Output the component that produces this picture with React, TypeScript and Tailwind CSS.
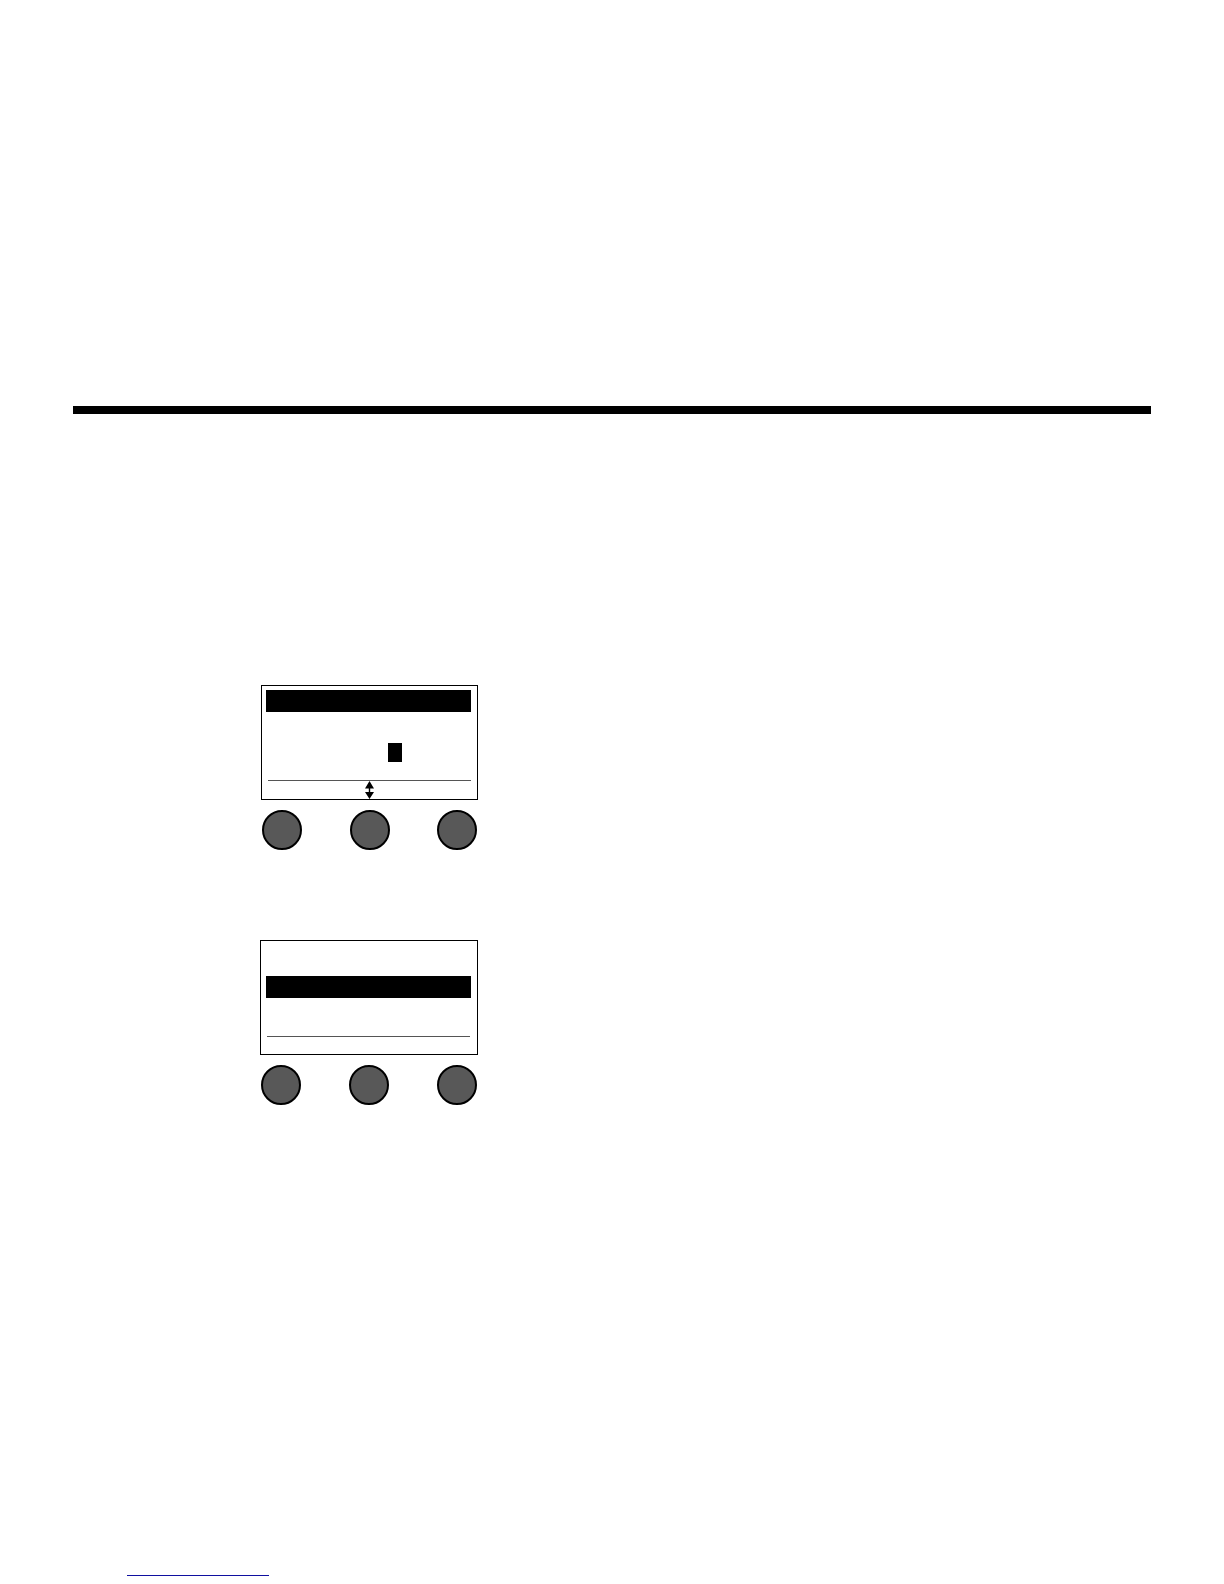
import type { ReactNode } from 'react'

const softKeys = ['Left', 'Middle', 'Right']

function SoftKeys() {
  return (
    <div className="mt-[10px] flex justify-between px-px">
      {softKeys.map((key) => (
        <button
          key={key}
          type="button"
          aria-label={`${key} soft key`}
          className="size-10 rounded-full border-2 border-black bg-[#585858]"
        />
      ))}
    </div>
  )
}

function Device({ label, className, children }: { label: string; className: string; children: ReactNode }) {
  return (
    <section aria-label={label} className={className}>
      <div className="flex h-[115px] flex-col border border-black pr-[6px]">{children}</div>
      <SoftKeys />
    </section>
  )
}

function UpDownArrow() {
  return (
    <svg viewBox="0 0 9 18" className="h-[18px] w-[9px]" aria-hidden="true">
      <path d="M4.5 0 L9 7.5 H5.2 V11 H9 L4.5 18 L0 11 H3.8 V7.5 H0 Z" fill="#000" />
    </svg>
  )
}

export default function App() {
  return (
    <div className="bg-white px-[73px] pb-2 font-['Liberation_Sans',sans-serif]">
      <header className="pt-[406px]">
        <hr className="h-2 border-0 bg-black" />
      </header>

      <main className="flex flex-col gap-[90px] pt-[271px] pl-[187px]">
        <Device label="Edit screen" className="ml-px w-[217px]">
          <div className="mt-1 ml-1 h-[22px] bg-black" />
          <div className="mt-[31px] ml-[126px] h-[19px] w-[14px] bg-black" />
          <hr className="mt-[18px] ml-[6px] border-[#555555]" />
          <div className="flex justify-center pl-[6px]">
            <UpDownArrow />
          </div>
        </Device>

        <Device label="List screen" className="w-[218px]">
          <div className="mt-[35px] ml-[5px] h-[22px] bg-black" />
          <hr className="mt-[38px] mr-px ml-[6px] border-[#555555]" />
        </Device>
      </main>

      <footer className="pt-[470px] pl-[54px]">
        <a href="#top" aria-label="Back to top" className="block h-px w-[142px] bg-[#1010a0]" />
      </footer>
    </div>
  )
}
